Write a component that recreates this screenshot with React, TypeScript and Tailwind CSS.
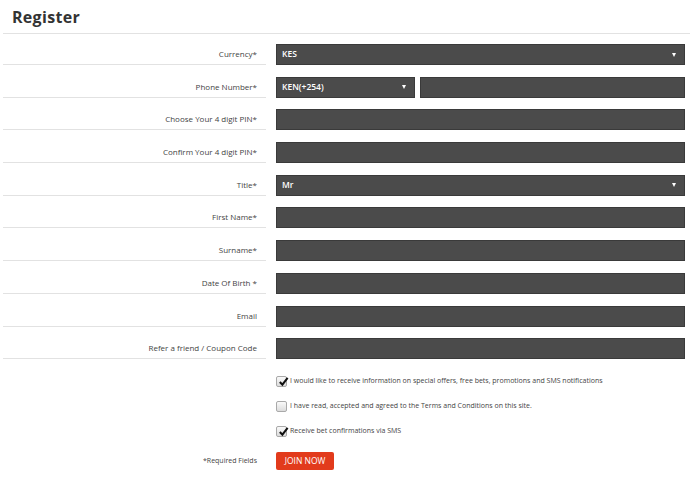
import React from 'react';

type Field = {
  label: string;
  kind: 'text' | 'select' | 'phone';
  value?: string;
};

const fields: Field[] = [
  { label: 'Currency*', kind: 'select', value: 'KES' },
  { label: 'Phone Number*', kind: 'phone', value: 'KEN(+254)' },
  { label: 'Choose Your 4 digit PIN*', kind: 'text' },
  { label: 'Confirm Your 4 digit PIN*', kind: 'text' },
  { label: 'Title*', kind: 'select', value: 'Mr' },
  { label: 'First Name*', kind: 'text' },
  { label: 'Surname*', kind: 'text' },
  { label: 'Date Of Birth *', kind: 'text' },
  { label: 'Email', kind: 'text' },
  { label: 'Refer a friend / Coupon Code', kind: 'text' },
];

const Arrow = () => (
  <span className="ml-auto mr-[3px] block h-0 w-0 border-x-[2.5px] border-t-[4px] border-x-transparent border-t-white" />
);

const Box = ({ children, className = '' }: { children?: React.ReactNode; className?: string }) => (
  <div
    className={`flex h-[21px] items-center border border-[#3a3a3a] bg-[#4b4b4b] px-[5px] text-[8.5px] font-semibold text-white ${className}`}
  >
    {children}
  </div>
);

const Check = ({ checked }: { checked: boolean }) => (
  <span className="relative flex h-[11px] w-[11px] shrink-0 items-center justify-center rounded-[2px] border border-[#a9a9a9] bg-gradient-to-b from-[#fafafa] to-[#dcdcdc]">
    {checked && (
      <svg viewBox="0 0 12 12" className="absolute left-[1px] top-[-1px] h-[11px] w-[11px]">
        <path d="M2 6.5 L4.8 9.5 L10.5 2" fill="none" stroke="#111" strokeWidth="2.2" />
      </svg>
    )}
  </span>
);

const App = () => {
  return (
    <div
      className="min-h-[483px] w-[690px] bg-white text-[#333]"
      style={{ fontFamily: '"Open Sans", "Noto Sans", sans-serif' }}
    >
      <div className="pl-[3px]">
        <h1 className="border-b border-[#e2e2e2] pb-[4px] pl-[9px] pt-[5px] text-[16px] font-bold leading-[24px] tracking-[0.3px] text-[#333]">
          Register
        </h1>
      </div>

      <div className="mt-[10px] flex flex-col gap-[11.7px] pl-[3px]">
        {fields.map((f) => (
          <div key={f.label} className="flex items-stretch">
            <div className="flex w-[263px] items-center justify-end border-b border-[#e2e2e2] pr-[9px] text-[8px] text-[#444]">
              {f.label}
            </div>
            <div className="ml-[10px] flex w-[409px] gap-[5px]">
              {f.kind === 'phone' ? (
                <>
                  <Box className="w-[139px]">
                    {f.value}
                    <Arrow />
                  </Box>
                  <Box className="flex-1" />
                </>
              ) : (
                <Box className="flex-1">
                  {f.value}
                  {f.kind === 'select' && <Arrow />}
                </Box>
              )}
            </div>
          </div>
        ))}
      </div>

      <div className="ml-[276px] mt-[17px] flex flex-col gap-[14px] text-[7px] text-[#444]">
        <label className="flex items-center gap-[3px]">
          <Check checked />
          I would like to receive information on special offers, free bets, promotions and SMS notifications
        </label>
        <label className="flex items-center gap-[3px]">
          <Check checked={false} />
          I have read, accepted and agreed to the Terms and Conditions on this site.
        </label>
        <label className="flex items-center gap-[3px]">
          <Check checked />
          Receive bet confirmations via SMS
        </label>
      </div>

      <div className="mt-[15px] flex items-center">
        <div className="w-[257px] text-right text-[7px] text-[#444]">*Required Fields</div>
        <button className="ml-[19px] flex h-[18px] w-[58px] items-center justify-center rounded-[2px] bg-[#e23b1c] text-[8.5px] text-white">
          JOIN NOW
        </button>
      </div>
    </div>
  );
};

export default App;
